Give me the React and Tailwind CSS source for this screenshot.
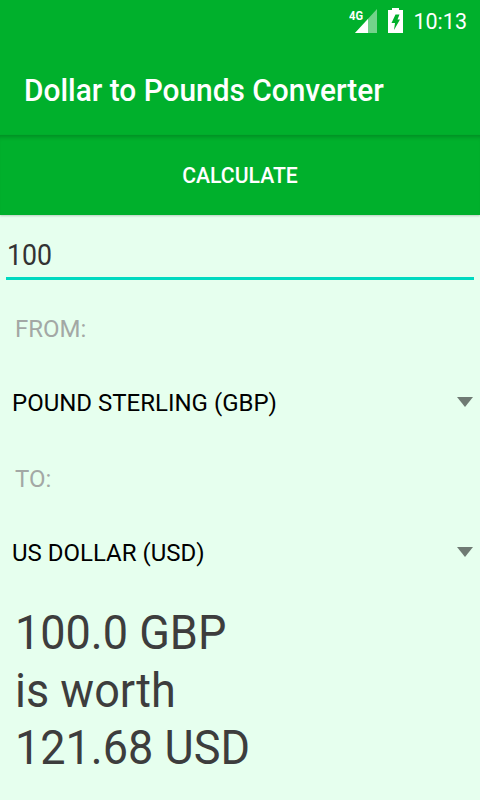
function StatusBar() {
  return (
    <div className="flex h-[45px] items-center justify-end bg-[#00b02c] pr-[13px] text-white">
      <svg width="28" height="24" viewBox="0 0 28 24" className="mr-[11px] mt-[-3px]">
        <path d="M6 24 L28 0 V24 Z" fill="white" fillOpacity="0.45" />
        <path d="M6 24 L19 10 V24 Z" fill="white" />
        <text x="0" y="11" fill="white" fontSize="13" fontWeight="700" textLength="14" lengthAdjust="spacingAndGlyphs" fontFamily="Roboto, sans-serif">4G</text>
      </svg>
      <svg width="15" height="25" viewBox="0 0 15 25" className="mr-[10px] mt-[-5px]">
        <path
          fillRule="evenodd"
          d="M4 0 H11 V2 H15 V25 H0 V2 H4 Z M7.5 6.5 H11.5 L9.5 11.5 H12 L6 22 L7 15 H3.5 Z"
          fill="white"
        />
      </svg>
      <span className="mt-[-1px] font-['Roboto',sans-serif] text-[21.5px] leading-none">10:13</span>
    </div>
  )
}

function Spinner({ value }) {
  return (
    <div className="mt-[16px] flex h-[72px] items-center justify-between pl-[12px] pr-[7px]">
      <span className="text-[24px] text-black">{value}</span>
      <svg width="16" height="10" viewBox="0 0 16 10" className="mt-[-2px]">
        <path d="M0 0 H16 L8 10 Z" fill="#6f7a73" />
      </svg>
    </div>
  )
}

export default function App() {
  return (
    <div className="flex h-[800px] w-[480px] flex-col overflow-hidden bg-[#e6ffee] font-['Roboto',sans-serif]">
      <StatusBar />
      <div className="flex h-[90px] items-center bg-[#00b02c] pl-[24px] pb-[1px] text-white">
        <span className="origin-left scale-x-[0.933] whitespace-nowrap text-[32px] font-medium">
          Dollar to Pounds Converter
        </span>
      </div>
      <button className="h-[80px] w-full bg-[#00b02c] pt-[2px] text-[21.2px] font-medium text-white shadow-[inset_0_5px_4px_-3px_rgba(0,0,0,0.2),0_1px_2px_rgba(0,0,0,0.2)]">
        CALCULATE
      </button>
      <div className="mx-[6px] mt-[15px] h-[50px] border-b-[3px] border-[#00d9c0] pl-[1px] leading-[50px] text-[#333]">
        <span className="inline-block origin-left scale-x-[0.92] text-[29px]">100</span>
      </div>
      <div className="mt-[27px] h-[44px] pl-[15px] text-[24px] leading-[44px] text-[#a3a8a5]">FROM:</div>
      <Spinner value="POUND STERLING (GBP)" />
      <div className="mt-[18px] h-[44px] pl-[15px] text-[24px] leading-[44px] text-[#a3a8a5]">TO:</div>
      <Spinner value="US DOLLAR (USD)" />
      <div className="mt-[15px] flex origin-left scale-x-[0.9375] flex-col pl-[16px] text-[48px] leading-[57.5px] text-[#3d3d3d]">
        <div>100.0 GBP</div>
        <div>is worth</div>
        <div>121.68 USD</div>
      </div>
    </div>
  )
}
